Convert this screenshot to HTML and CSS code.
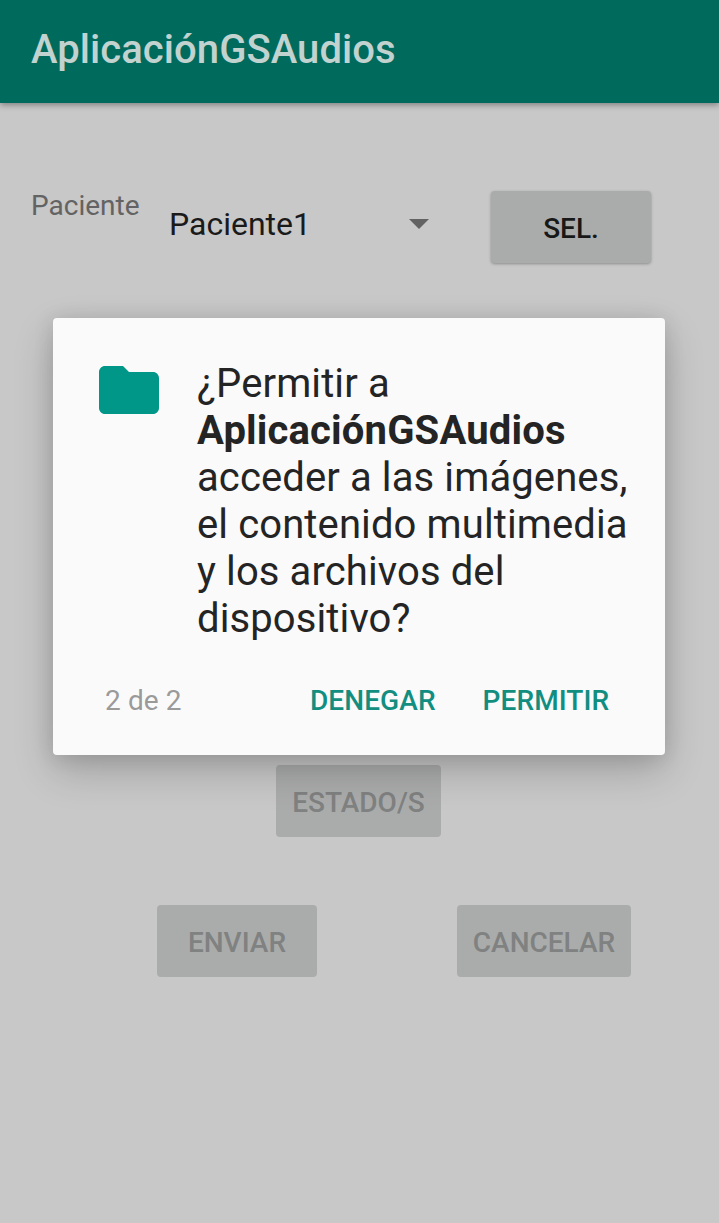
FILE: index.html
```html
<!DOCTYPE html>
<html lang="es">
<head>
<meta charset="utf-8">
<title>AplicaciónGSAudios</title>
<link rel="stylesheet" href="styles.css">
</head>
<body>
<div class="screen">
  <header class="app-bar"><h1 class="app-title">AplicaciónGSAudios</h1></header>
  <main class="form">
    <div class="patient-row">
      <span class="patient-label">Paciente</span>
      <div class="spinner">
        <span class="spinner-value">Paciente1</span>
        <svg class="spinner-arrow" width="20" height="10" viewBox="0 0 20 10"><path d="M0 0h20L10 10z"/></svg>
      </div>
      <button class="btn btn-select">SEL.</button>
    </div>
    <div class="status-row"><button class="btn btn-status" disabled>ESTADO/S</button></div>
    <div class="submit-row">
      <button class="btn btn-send" disabled>ENVIAR</button>
      <button class="btn btn-cancel" disabled>CANCELAR</button>
    </div>
  </main>
  <section class="dialog" role="dialog">
    <div class="dialog-body">
      <svg class="folder" width="72" height="72" viewBox="0 0 24 24"><path d="M10 4H4c-1.1 0-2 .9-2 2v12c0 1.1.9 2 2 2h16c1.1 0 2-.9 2-2V8c0-1.1-.9-2-2-2h-8z"/></svg>
      <p class="message">¿Permitir a<br><b>AplicaciónGSAudios</b><br>acceder a las imágenes,<br>el contenido multimedia<br>y los archivos del<br>dispositivo?</p>
    </div>
    <div class="dialog-actions">
      <span class="counter">2 de 2</span>
      <button class="action action-deny">DENEGAR</button>
      <button class="action">PERMITIR</button>
    </div>
  </section>
</div>
</body>
</html>
```
FILE: styles.css
```css
* { box-sizing: border-box; }
body { margin: 0; font-family: Roboto, sans-serif; }
button { font: inherit; border: 0; margin: 0; padding: 0; }
.screen { position: relative; height: 1223px; overflow: hidden; background: #c8c8c8; }
.app-bar {
  height: 103px;
  padding: 26px 31px 0;
  background: #006b5d;
  box-shadow: 0 2px 6px rgba(0, 0, 0, .36);
}
.app-title { margin: 0; font-size: 40px; line-height: 47px; font-weight: 500; letter-spacing: .06px; color: #c2d2cf; }
.form { padding-top: 86px; }
.patient-row { display: flex; align-items: flex-start; padding-left: 31px; height: 576px; }
.patient-label { width: 138px; font-size: 28px; line-height: 33px; color: #636363; }
.spinner {
  display: flex;
  align-items: center;
  width: 260px;
  margin-top: 16px;
  justify-content: space-between;
}
.spinner-value { font-size: 32px; line-height: 38px; color: #1a1a1a; }
.spinner-arrow { fill: #626262; }
.btn {
  height: 72px;
  padding-top: 2px;
  border-radius: 4px;
  background: #aaacab;
  color: #808181;
  font-size: 28px;
  font-weight: 500;
  line-height: 33px;
}
.btn-select {
  width: 160px;
  height: 72px;
  margin: 2px 0 0 62px;
  padding-top: 3px;
  color: #171817;
  box-shadow: 0 1px 3px rgba(0, 0, 0, .3);
}
.status-row { padding-left: 276px; height: 140px; }
.btn-status { width: 165px; }
.submit-row { display: flex; gap: 140px; padding-left: 157px; }
.btn-send { width: 160px; }
.btn-cancel { width: 174px; }
.dialog {
  position: absolute;
  left: 53px;
  top: 318px;
  width: 612px;
  height: 437px;
  padding: 36px 38px 0 40px;
  border-radius: 4px;
  background: #fafafa;
  box-shadow: 0 16px 40px rgba(0, 0, 0, .2), 0 2px 20px rgba(0, 0, 0, .12);
}
.dialog-body { display: flex; gap: 32px; height: 330px; }
.folder { flex: none; fill: #009688; }
.message { margin: 6px 0 0; font-size: 40px; line-height: 47px; letter-spacing: .11px; color: #242424; white-space: nowrap; }
.message b { letter-spacing: .16px; }
.dialog-actions { display: flex; padding-left: 12px; font-size: 28px; line-height: 33px; }
.counter { width: 205px; color: #9a9a9a; letter-spacing: .1px; }
.action { background: none; color: #128e81; font-weight: 500; letter-spacing: .08px; }
.action-deny { margin-right: 47px; }
```
